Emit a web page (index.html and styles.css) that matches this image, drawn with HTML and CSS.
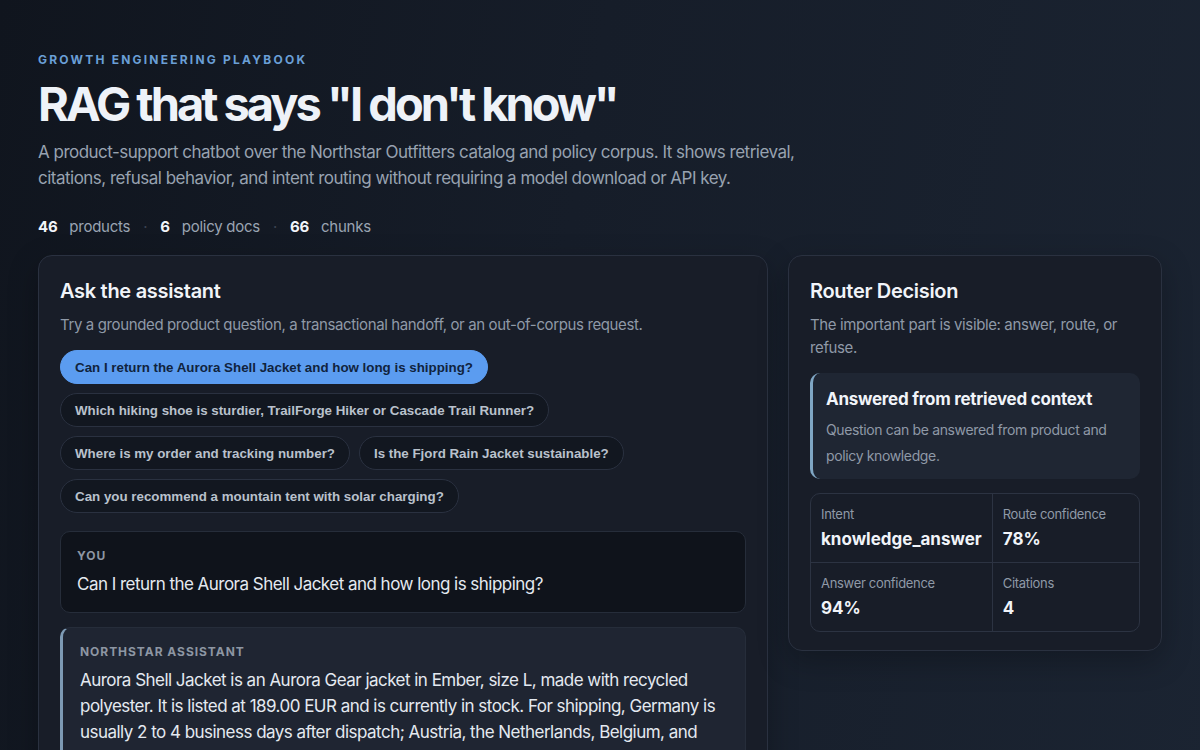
FILE: index.html
```html
<!DOCTYPE html>
<html lang="en">
<head>
    <meta charset="UTF-8">
    <meta name="viewport" content="width=device-width, initial-scale=1.0">
    <title>RAG that says "I don't know"</title>
    <link rel="stylesheet" href="styles.css">
</head>
<body>
    <main class="page">
        <header class="hero">
            <p class="eyebrow">Growth Engineering Playbook</p>
            <h1>RAG that says "I don't know"</h1>
            <p class="lede">A product-support chatbot over the Northstar Outfitters catalog and policy corpus. It shows retrieval, citations, refusal behavior, and intent routing without requiring a model download or API key.</p>
            <div class="stats">
                <span><strong>46</strong> products</span>
                <span class="dot">·</span>
                <span><strong>6</strong> policy docs</span>
                <span class="dot">·</span>
                <span><strong>66</strong> chunks</span>
            </div>
        </header>

        <div class="layout">
            <section class="card chat">
                <h2>Ask the assistant</h2>
                <p class="hint">Try a grounded product question, a transactional handoff, or an out-of-corpus request.</p>
                <div class="chips">
                    <button class="chip active">Can I return the Aurora Shell Jacket and how long is shipping?</button>
                    <button class="chip">Which hiking shoe is sturdier, TrailForge Hiker or Cascade Trail Runner?</button>
                    <button class="chip">Where is my order and tracking number?</button>
                    <button class="chip">Is the Fjord Rain Jacket sustainable?</button>
                    <button class="chip">Can you recommend a mountain tent with solar charging?</button>
                </div>

                <div class="msg user">
                    <div class="who">You</div>
                    <p>Can I return the Aurora Shell Jacket and how long is shipping?</p>
                </div>
                <div class="msg bot">
                    <div class="who">Northstar Assistant</div>
                    <p>Aurora Shell Jacket is an Aurora Gear jacket in Ember, size L, made with recycled polyester. It is listed at 189.00 EUR and is currently in stock. For shipping, Germany is usually 2 to 4 business days after dispatch; Austria, the Netherlands, Belgium, and Luxembourg are usually 3 to 6 business days. The return policy lets you send unworn items back within 30 days.</p>
                </div>
            </section>

            <aside class="card router">
                <h2>Router Decision</h2>
                <p class="hint">The important part is visible: answer, route, or refuse.</p>
                <div class="decision">
                    <h3>Answered from retrieved context</h3>
                    <p>Question can be answered from product and policy knowledge.</p>
                </div>
                <div class="metrics">
                    <div class="metric">
                        <span>Intent</span>
                        <strong>knowledge_answer</strong>
                    </div>
                    <div class="metric">
                        <span>Route confidence</span>
                        <strong>78%</strong>
                    </div>
                    <div class="metric">
                        <span>Answer confidence</span>
                        <strong>94%</strong>
                    </div>
                    <div class="metric">
                        <span>Citations</span>
                        <strong>4</strong>
                    </div>
                </div>
            </aside>
        </div>
    </main>
</body>
</html>
```

FILE: styles.css
```css
body {
    margin: 0;
    min-height: 100vh;
    font-family: 'Inter', 'Noto Sans', sans-serif;
    color: #e6ebf2;
    background: linear-gradient(100deg, #10151e 0%, #161d29 45%, #1b2432 100%);
}
.page {
    max-width: 1124px;
    margin: 0 auto;
    padding: 52px 0 40px;
}

/* Hero */
.eyebrow {
    margin: 0;
    font-size: 12px;
    font-weight: 700;
    letter-spacing: 0.185em;
    text-transform: uppercase;
    color: #6a9fd6;
}
h1 {
    margin: 10px 0 8px;
    font-size: 47px;
    font-weight: 700;
    letter-spacing: -0.064em;
    line-height: 1.15;
    color: #eef2f8;
}
.lede {
    margin: 0;
    max-width: 780px;
    font-size: 17px;
    line-height: 26px;
    letter-spacing: -0.03em;
    color: #98a2b0;
}
.stats {
    display: flex;
    gap: 13px;
    margin: 26px 0 19px;
    font-size: 15px;
    letter-spacing: -0.017em;
    color: #9aa4b2;
}
.stats strong {
    color: #f1f4f9;
    font-weight: 700;
    margin-right: 8px;
}
.stats .dot {
    color: #3b4352;
}

/* Layout */
.layout {
    display: grid;
    grid-template-columns: 730px 1fr;
    gap: 20px;
    align-items: start;
}
.card {
    background: #181d28;
    border: 1px solid #2a3140;
    border-radius: 14px;
    padding: 21px 21px 18px;
    box-shadow: 0 10px 30px rgba(0, 0, 0, 0.25);
}
.card h2 {
    margin: 0;
    font-size: 20px;
    font-weight: 600;
    line-height: 28px;
    letter-spacing: -0.015em;
    color: #f1f4f9;
}
.hint {
    margin: 8px 0 14px;
    font-size: 15px;
    line-height: 23px;
    letter-spacing: -0.025em;
    color: #8f99a7;
}

/* Chips */
.chips {
    display: flex;
    flex-wrap: wrap;
    gap: 9px 9px;
    margin-bottom: 18px;
}
.chip {
    font-family: 'Liberation Sans', Arial, sans-serif;
    font-size: 13.33px;
    font-weight: 700;
    color: #b9c1cc;
    background: #121720;
    border: 1px solid #2a3140;
    border-radius: 999px;
    padding: 0 14px;
    height: 34px;
    cursor: pointer;
}
.chip.active {
    background: #5b9cf0;
    border-color: #5b9cf0;
    color: #10233d;
}

/* Messages */
.msg {
    border-radius: 10px;
    border: 1px solid #262d3a;
    padding: 16px 16px 15px;
    margin-bottom: 14px;
}
.msg .who {
    font-size: 12px;
    line-height: 16px;
    font-weight: 700;
    letter-spacing: 0.08em;
    text-transform: uppercase;
    color: #8d96a3;
}
.msg p {
    margin: 7px 0 0;
    font-size: 17px;
    line-height: 26px;
    letter-spacing: -0.031em;
    color: #e4e9f0;
}
.msg.user {
    background: #0f131b;
}
.msg.bot {
    background: #1f2532;
    border-left: 3px solid #7d9ab4;
    padding-left: 17px;
}

/* Router */
.router .hint {
    margin-bottom: 14px;
}
.decision {
    background: #1f2633;
    border-left: 3px solid #7fa6c4;
    border-radius: 10px;
    padding: 14px 16px 10px 13px;
    margin-bottom: 14px;
}
.decision h3 {
    margin: 0;
    font-size: 17px;
    font-weight: 700;
    line-height: 24px;
    letter-spacing: -0.015em;
    color: #f1f4f9;
}
.decision p {
    margin: 6px 0 0;
    font-size: 14px;
    line-height: 26px;
    letter-spacing: -0.026em;
    color: #8f99a7;
}
.metrics {
    display: grid;
    grid-template-columns: auto 1fr;
    border: 1px solid #2c3342;
    border-radius: 10px;
    overflow: hidden;
}
.metric {
    display: flex;
    flex-direction: column;
    padding: 11px 10px 11px;
    border-right: 1px solid #2c3342;
    border-bottom: 1px solid #2c3342;
}
.metric:nth-child(2n) {
    border-right: none;
}
.metric:nth-child(n+3) {
    border-bottom: none;
}
.metric span {
    font-size: 13px;
    line-height: 18px;
    letter-spacing: -0.024em;
    color: #8f99a7;
}
.metric strong {
    margin-top: 4px;
    font-size: 17px;
    line-height: 24px;
    font-weight: 700;
    color: #f1f4f9;
}
```
